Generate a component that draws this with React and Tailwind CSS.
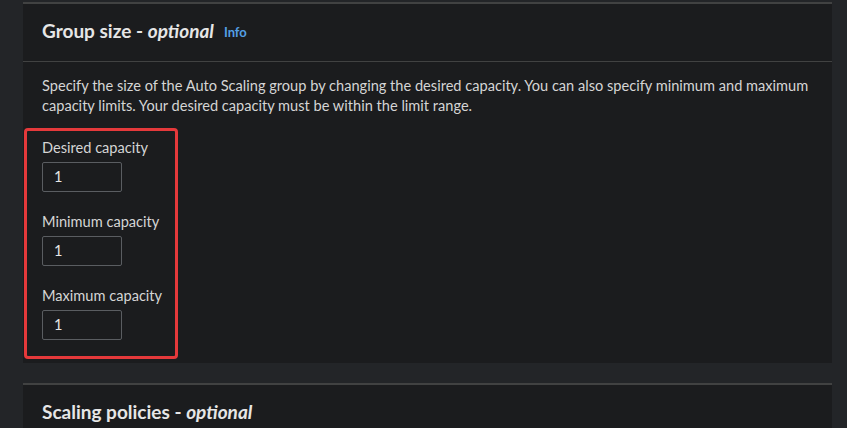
export default function App() {
  const fields = ["Desired capacity", "Minimum capacity", "Maximum capacity"];

  return (
    <div
      className="h-[428px] w-[847px] overflow-hidden bg-[#232528] pl-[23px] pr-[15px] text-[#d1d5db]"
      style={{ fontFamily: 'Lato, "Open Sans", sans-serif' }}
    >
      {/* Group size card */}
      <div className="mt-[2px] border-t-2 border-[#414242] bg-[#1b1c1e]">
        <div className="flex h-[58px] items-center gap-[10px] border-b border-[#414242] px-[19px] pb-[2px]">
          <h2 className="text-[19px] font-bold text-[#e6e6e6]">
            Group size - <i>optional</i>
          </h2>
          <span className="mt-[3px] text-[13px] font-bold text-[#539fe5]">Info</span>
        </div>

        <div className="px-[19px] pt-[14px] text-[14.6px] leading-[20px] text-[#d5d5d5]">
          Specify the size of the Auto Scaling group by changing the desired capacity. You can also specify minimum and maximum capacity limits. Your desired capacity must be within the limit range.
        </div>

        <div className="pb-[4px] pl-px pt-[12px]">
          <div className="w-[154px] rounded-[4px] border-[3px] border-[#e5393b] pb-[16px] pl-[15px] pt-[7px]">
            {fields.map((f, i) => (
              <div key={f} className={i > 0 ? "mt-[20px]" : ""}>
                <label className="block text-[14.6px] leading-[20px] text-[#d5d5d5]">{f}</label>
                <div className="mt-[4px] flex h-[30px] w-[80px] items-center rounded-[2px] border border-[#5a5d61] pl-[11px] text-[14.6px] text-[#e6e6e6]">
                  1
                </div>
              </div>
            ))}
          </div>
        </div>
      </div>

      {/* Scaling policies card */}
      <div className="mt-[20px] border-t-2 border-[#414242] bg-[#1b1c1e]">
        <div className="flex h-[58px] items-center px-[19px] pb-[4px]">
          <h2 className="text-[19px] font-bold text-[#e6e6e6]">
            Scaling policies - <i>optional</i>
          </h2>
        </div>
      </div>
    </div>
  );
}
